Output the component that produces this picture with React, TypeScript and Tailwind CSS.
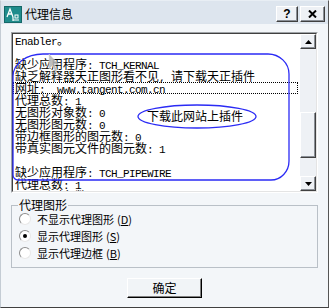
import React from "react";

const lines = [
  "Enabler。",
  "",
  "缺少应用程序: TCH_KERNAL",
  "缺乏解释器天正图形看不见, 请下载天正插件",
  "网址:  www.tangent.com.cn",
  "代理总数: 1",
  "无图形对象数: 0",
  "无图形图元数: 0",
  "带边框图形的图元数: 0",
  "带真实图元文件的图元数: 1",
  "",
  "缺少应用程序: TCH_PIPEWIRE",
  "代理总数: 1",
  "无图形对象数: 0",
];

function TextLine({ text, link }: { text: string; link?: boolean }) {
  const parts = text.split(/([\x20-\x7e]+)/);
  return (
    <div
      className={
        "h-[12px] leading-[12px] whitespace-pre pl-[2px] " +
        (link ? "mr-[2px] outline-1 outline-dotted outline-black -outline-offset-1" : "")
      }
    >
      {parts.map((p, i) =>
        i % 2 ? (
          <span key={i} className="[font-family:'Liberation_Mono',monospace] text-[11px] leading-[12px] tracking-[-0.6px]">
            {p}
          </span>
        ) : (
          <span key={i}>{p}</span>
        )
      )}
    </div>
  );
}

function Arrow({ up }: { up?: boolean }) {
  return (
    <svg width="7" height="4" viewBox="0 0 7 4">
      <polygon points={up ? "3.5,0 7,4 0,4" : "0,0 7,0 3.5,4"} fill="#000" />
    </svg>
  );
}

const raised =
  "border border-t-white border-l-white border-b-[#404040] border-r-[#404040] shadow-[inset_-1px_-1px_0_#8a8f96] bg-[#eef1f5]";

function Radio({ checked, label, k }: { checked?: boolean; label: string; k: string }) {
  return (
    <div className="h-[17px] flex items-center gap-[6px]">
      <div className="w-[12px] h-[12px] rounded-full bg-white border border-t-[#8c8c8c] border-l-[#8c8c8c] border-b-[#e8e8e8] border-r-[#e8e8e8] flex items-center justify-center">
        {checked && <div className="w-[4px] h-[4px] rounded-full bg-black" />}
      </div>
      <span className="text-[11px] leading-[12px]">
        {label}
        <span className="ml-[3px] text-[11px]">
          (<span className="underline">{k}</span>)
        </span>
      </span>
    </div>
  );
}

export default function App() {
  return (
    <div className="relative w-[329px] h-[308px] bg-[#f3f6f9] border border-l-[#c4ccd4] border-t-[#e8eef4] border-r-[#555] border-b-[#404040] [font-family:'Noto_Sans_CJK_SC',sans-serif] text-black overflow-hidden">
      {/* title bar */}
      <div className="h-[23px] pt-[3px] flex items-center bg-[#dde5ee] pl-[3px] pr-[3px]">
        <svg width="18" height="17" viewBox="0 0 18 17">
          <rect width="18" height="17" fill="#1f8c8c" />
          <rect x="0.5" y="0.5" width="17" height="16" fill="none" stroke="#156868" />
          <path d="M3 11 L6 3 L9 11 M4.2 8 H7.8" stroke="#fff" strokeWidth="1.3" fill="none" />
          <path d="M9 14 H15 M9 11 V15" stroke="#fff" strokeWidth="1.2" fill="none" />
          <rect x="11" y="9" width="3" height="3" fill="none" stroke="#fff" strokeWidth="1" />
        </svg>
        <span className="ml-[3px] text-[12px] leading-[14px]">代理信息</span>
        <div className="ml-auto flex gap-[2px]">
          <div className={raised + " w-[22px] h-[16px] flex items-center justify-center"}>
            <span className="[font-family:'Liberation_Sans',sans-serif] font-bold text-[12px] leading-[12px]">?</span>
          </div>
          <div className={raised + " w-[25px] h-[16px] flex items-center justify-center"}>
            <svg width="9" height="8" viewBox="0 0 9 8">
              <path d="M1 0.5 L8 7.5 M8 0.5 L1 7.5" stroke="#000" strokeWidth="2" />
            </svg>
          </div>
        </div>
      </div>

      <div className="px-[10px] pt-[8px]">
        {/* text area */}
        <div className="h-[161px] border border-t-[#a0a4a8] border-l-[#a0a4a8] border-b-white border-r-white">
          <div className="h-full flex border border-t-[#404040] border-l-[#404040] border-b-[#e4e4e4] border-r-[#e4e4e4] bg-white">
            <div className="flex-1 overflow-hidden text-[12px]">
              {lines.map((l, i) => (
                <TextLine key={i} text={l} link={i === 4} />
              ))}
            </div>
            <div className="w-[16px] flex flex-col bg-[#eef1f5]">
              <div className={raised + " h-[15px] flex items-center justify-center"}>
                <Arrow up />
              </div>
              <div className="h-[63px]" />
              <div className={raised + " h-[46px]"} />
              <div className="flex-1" />
              <div className={raised + " h-[15px] flex items-center justify-center"}>
                <Arrow />
              </div>
            </div>
          </div>
        </div>

        {/* group box */}
        <div className="relative mt-[12px] h-[63px] border border-[#b9c0c7] pl-[7px] pt-[4px]">
          <span className="absolute -top-[7px] left-[6px] px-[1px] bg-[#f3f6f9] text-[12px] leading-[12px]">代理图形</span>
          <Radio label="不显示代理图形" k="D" />
          <Radio label="显示代理图形" k="S" checked />
          <Radio label="显示代理边框" k="B" />
        </div>

        <div className="mt-[10px] flex justify-center">
          <div className="w-[75px] h-[20px] border border-t-white border-l-white border-b-black border-r-black shadow-[inset_-1px_-1px_0_#808080] bg-[#f1f4f7] flex items-center justify-center text-[12px]">
            确定
          </div>
        </div>
      </div>

      {/* annotations drawn over the dialog */}
      <svg className="absolute left-0 top-0 pointer-events-none" width="329" height="308" viewBox="0 0 329 308">
        <path
          d="M42 53 L267 53 A21 20 0 0 1 288 73 L288 160 A18 19 0 0 1 270 179 L17 179 A5 5 0 0 1 12 174 L12 75 A30 22 0 0 1 42 53 Z"
          fill="none"
          stroke="#2b2bf5"
          strokeWidth="1.3"
        />
        <ellipse cx="196" cy="115.5" rx="59" ry="11.5" fill="none" stroke="#2b2bf5" strokeWidth="1.3" />
        <polygon points="48,53 48,68 51.5,64.5 54,70 56,69 53.5,63.5 58,63.5" fill="#b4b4b4" stroke="#e0e0e0" strokeWidth="0.6" opacity="0.85" />
      </svg>
      <div className="absolute left-[146px] top-[109px] text-[12px] leading-[12px] pointer-events-none">下载此网站上插件</div>
    </div>
  );
}
